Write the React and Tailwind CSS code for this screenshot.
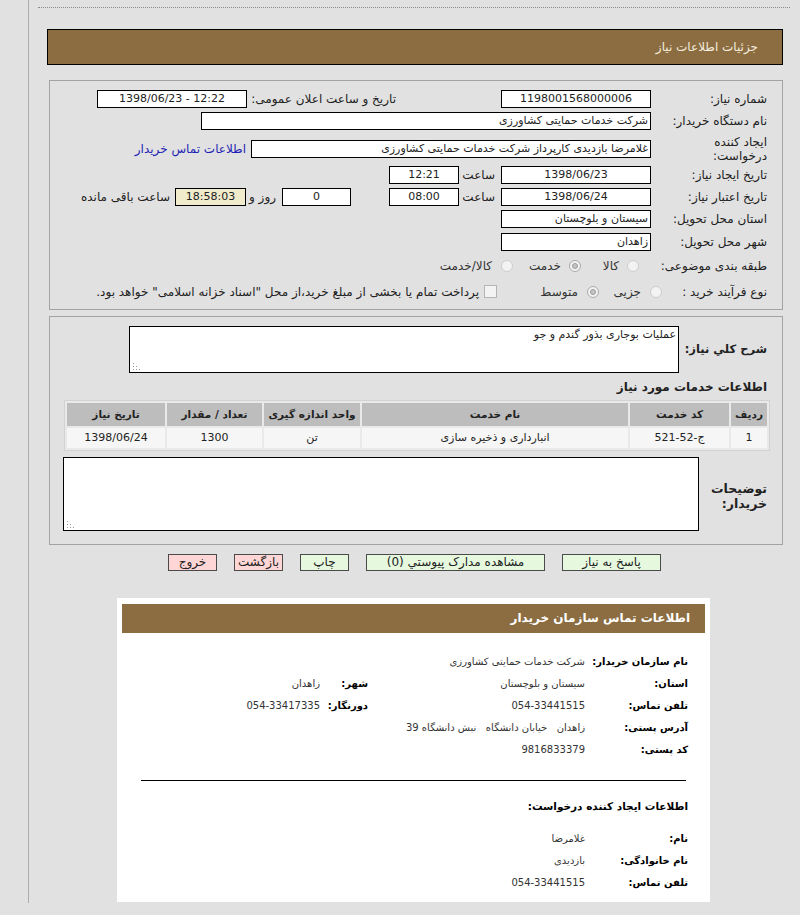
import React from "react";

const Box = ({ w, center, yellow, ltr, children }) => (
  <div
    dir={ltr ? "ltr" : undefined}
    className={`h-[18px] shrink-0 overflow-hidden whitespace-nowrap border border-black px-[2px] text-[11px] leading-[16px] ${w} ${center ? "text-center" : "text-right"} ${yellow ? "bg-[#efebcb]" : "bg-white"}`}
  >
    {children}
  </div>
);

const Radio = ({ checked }) => (
  <span
    className={`flex h-[12px] w-[12px] shrink-0 items-center justify-center rounded-full border bg-[#f3f3f3] ${checked ? "border-[#a9a9a9]" : "border-[#cdcdcd]"}`}
  >
    {checked && <span className="h-[6px] w-[6px] rounded-full border border-[#9a9a9a] bg-[#c4c4c4]" />}
  </span>
);

const Grip = () => (
  <svg className="absolute bottom-[2px] left-[2px]" width="8" height="8" viewBox="0 0 8 8">
    <g fill="#9a9a9a">
      <rect x="1" y="1" width="1" height="1" />
      <rect x="1" y="4" width="1" height="1" />
      <rect x="4" y="4" width="1" height="1" />
      <rect x="1" y="7" width="1" height="1" />
      <rect x="4" y="7" width="1" height="1" />
      <rect x="7" y="7" width="1" height="1" />
    </g>
  </svg>
);

const Btn = ({ w, pink, children }) => (
  <div
    className={`h-[17px] whitespace-nowrap border border-[#4a4a4a] text-center text-[12px] leading-[15px] ${w} ${pink ? "bg-[#ffd6d6]" : "bg-[#e6f9df]"}`}
  >
    {children}
  </div>
);

const InfoRow = ({ label, value, label2, value2 }) => (
  <div className="flex h-[22px] items-center whitespace-nowrap">
    <div className="w-[103px] shrink-0 text-[10px] font-bold text-black">{label}</div>
    <div className="w-[217px] shrink-0 whitespace-pre text-[10px] text-[#333]">{value}</div>
    {label2 && <div className="w-[48px] shrink-0 text-[10px] font-bold text-black">{label2}</div>}
    {value2 && <div className="text-[10px] text-[#333]">{value2}</div>}
  </div>
);

export default function App() {
  const th = "h-[23px] whitespace-nowrap bg-[#bdbdbd] px-1 text-center text-[10.5px] font-bold text-[#222]";
  const td = "h-[20px] whitespace-nowrap bg-[#f6f6f6] px-1 text-center";
  return (
    <div className="min-h-[915px] bg-[#e1e1e1] font-['DejaVu_Sans',sans-serif] text-[12px] text-[#222]">
      <div className="ml-[28px] h-[903px] border-l border-[#acacac] pt-[7px]">
        <div className="ml-[9px] mr-[10px] border-t border-dotted border-[#8a8a8a]" />

        <div
          dir="rtl"
          className="ml-[18px] mr-[17px] mt-[21px] h-[36px] border border-black bg-[#8c6d42] pr-[24px] text-[12px] leading-[34px] text-[#f3ecdd]"
        >
          جزئیات اطلاعات نیاز
        </div>

        <div dir="rtl" className="ml-[20px] mr-[17px] mt-[15px] border border-[#a3a3a3] pb-[9px] pr-[15px] pt-[9px]">
          <div className="flex h-[18px] items-center">
            <div className="w-[116px] shrink-0">شماره نیاز:</div>
            <Box w="w-[150px]" center>1198001568000006</Box>
            <div className="mr-[105px] w-[149px] shrink-0">تاریخ و ساعت اعلان عمومی:</div>
            <Box w="w-[150px]" center ltr>1398/06/23 - 12:22</Box>
          </div>

          <div className="mt-[4px] flex h-[18px] items-center">
            <div className="w-[116px] shrink-0">نام دستگاه خریدار:</div>
            <Box w="w-[450px]">شرکت خدمات حمایتی کشاورزی</Box>
          </div>

          <div className="mt-[4px] flex h-[29px] items-center">
            <div className="w-[116px] shrink-0 leading-[14px]">
              ایجاد کننده
              <br />
              درخواست:
            </div>
            <Box w="w-[400px]">غلامرضا بازدیدی کارپرداز شرکت خدمات حمایتی کشاورزی</Box>
            <div className="mr-[5px] text-[#1f1fb4]">اطلاعات تماس خریدار</div>
          </div>

          <div className="mt-[3px] flex h-[18px] items-center">
            <div className="w-[116px] shrink-0">تاریخ ایجاد نیاز:</div>
            <Box w="w-[150px]" center>1398/06/23</Box>
            <div className="w-[42px] shrink-0 pr-[6px]">ساعت</div>
            <Box w="w-[70px]" center>12:21</Box>
          </div>

          <div className="mt-[4px] flex h-[18px] items-center">
            <div className="w-[116px] shrink-0">تاریخ اعتبار نیاز:</div>
            <Box w="w-[150px]" center>1398/06/24</Box>
            <div className="w-[42px] shrink-0 pr-[6px]">ساعت</div>
            <Box w="w-[70px]" center>08:00</Box>
            <div className="mr-[38px]">
              <Box w="w-[69px]" center>0</Box>
            </div>
            <div className="w-[36px] shrink-0 pr-[6px]">روز و</div>
            <Box w="w-[71px]" center yellow>18:58:03</Box>
            <div className="pr-[5px]">ساعت باقی مانده</div>
          </div>

          <div className="mt-[4px] flex h-[18px] items-center">
            <div className="w-[116px] shrink-0">استان محل تحویل:</div>
            <Box w="w-[150px]">سیستان و بلوچستان</Box>
          </div>

          <div className="mt-[5px] flex h-[18px] items-center">
            <div className="w-[116px] shrink-0">شهر محل تحویل:</div>
            <Box w="w-[150px]">زاهدان</Box>
          </div>

          <div className="mt-[6px] flex h-[17px] items-center text-[#333]">
            <div className="w-[128px] shrink-0 text-[#222]">طبقه بندی موضوعی:</div>
            <Radio />
            <div className="w-[46px] shrink-0 pr-[8px]">کالا</div>
            <Radio checked />
            <div className="w-[56px] shrink-0 pr-[8px]">خدمت</div>
            <Radio />
            <div className="pr-[9px]">کالا/خدمت</div>
          </div>

          <div className="mt-[9px] flex h-[17px] items-center text-[#333]">
            <div className="w-[105px] shrink-0 text-[#222]">نوع فرآیند خرید :</div>
            <Radio />
            <div className="w-[51px] shrink-0 pr-[9px]">جزیی</div>
            <Radio checked />
            <div className="w-[90px] shrink-0 pr-[9px]">متوسط</div>
            <span className="h-[13px] w-[13px] shrink-0 border border-[#b4b4b4] bg-[#f3f3f3]" />
            <div className="whitespace-nowrap pr-[5px] text-[12px] text-[#222]">
              پرداخت تمام یا بخشی از مبلغ خرید،از محل "اسناد خزانه اسلامی" خواهد بود.
            </div>
          </div>
        </div>

        <div dir="rtl" className="ml-[20px] mr-[17px] mt-[6px] border border-[#a3a3a3] pb-[13px] pr-[15px] pt-[9px]">
          <div className="flex items-center">
            <div className="w-[88px] shrink-0 whitespace-nowrap text-[11.5px] font-bold">شرح کلي نیاز:</div>
            <div className="relative h-[47px] w-[550px] shrink-0 border border-black bg-white px-[2px] text-[11px] leading-[15px]">
              عملیات بوجاری بذور گندم و جو
              <Grip />
            </div>
          </div>

          <div className="mt-[6px] h-[16px] whitespace-nowrap text-[12px] font-bold leading-[16px]">اطلاعات خدمات مورد نیاز</div>

          <table className="-mr-[3px] mt-[5px] w-[706px] border-separate border-spacing-[2px] border border-[#d2d2d2] bg-[#e9e9e9] text-[11px]">
            <thead>
              <tr>
                <th className={`${th} w-[29px]`}>ردیف</th>
                <th className={`${th} w-[99px]`}>کد خدمت</th>
                <th className={th}>نام خدمت</th>
                <th className={`${th} w-[96px]`}>واحد اندازه گیری</th>
                <th className={`${th} w-[95px]`}>تعداد / مقدار</th>
                <th className={`${th} w-[98px]`}>تاریخ نیاز</th>
              </tr>
            </thead>
            <tbody>
              <tr>
                <td className={td}>1</td>
                <td className={td}>ج-52-521</td>
                <td className={td}>انبارداری و ذخیره سازی</td>
                <td className={td}>تن</td>
                <td className={td}>1300</td>
                <td className={td}>1398/06/24</td>
              </tr>
            </tbody>
          </table>

          <div className="mt-[6px] flex items-center">
            <div className="w-[68px] shrink-0 pt-[4px] text-[12.5px] font-bold leading-[15px]">
              توضیحات
              <br />
              خریدار:
            </div>
            <div className="relative h-[74px] w-[636px] shrink-0 border border-black bg-white">
              <Grip />
            </div>
          </div>
        </div>

        <div dir="rtl" className="mt-[9px] flex justify-center gap-[17px]">
          <Btn w="w-[99px]">پاسخ به نیاز</Btn>
          <Btn w="w-[179px]">مشاهده مدارک پیوستي (0)</Btn>
          <Btn w="w-[49px]">چاپ</Btn>
          <Btn w="w-[49px]" pink>بازگشت</Btn>
          <Btn w="w-[49px]" pink>خروج</Btn>
        </div>

        <div dir="rtl" className="ml-[88px] mt-[27px] h-[304px] w-[593px] bg-white pt-[6px]">
          <div className="mx-[5px] h-[29px] bg-[#8c6d42] pr-[15px] text-[12px] font-bold leading-[29px] text-white">
            اطلاعات تماس سازمان خریدار
          </div>
          <div className="pr-[22px] pt-[17px]">
            <InfoRow label="نام سازمان خریدار:" value="شرکت خدمات حمایتی کشاورزی" />
            <InfoRow label="استان:" value="سیستان و بلوچستان" label2="شهر:" value2="زاهدان" />
            <InfoRow label="تلفن تماس:" value="054-33441515" label2="دورنگار:" value2="054-33417335" />
            <InfoRow label="آدرس پستی:" value="زاهدان   خیابان دانشگاه   نبش دانشگاه 39" />
            <InfoRow label="کد پستی:" value="9816833379" />
          </div>
          <div className="ml-[24px] mr-[24px] mt-[20px] border-t border-black" />
          <div className="mt-[17px] h-[16px] pr-[22px] text-[10.5px] font-bold leading-[16px] text-black">
            اطلاعات ایجاد کننده درخواست:
          </div>
          <div className="pr-[22px] pt-[13px]">
            <InfoRow label="نام:" value="غلامرضا" />
            <InfoRow label="نام خانوادگی:" value="بازدیدی" />
            <InfoRow label="تلفن تماس:" value="054-33441515" />
          </div>
        </div>
      </div>
    </div>
  );
}
